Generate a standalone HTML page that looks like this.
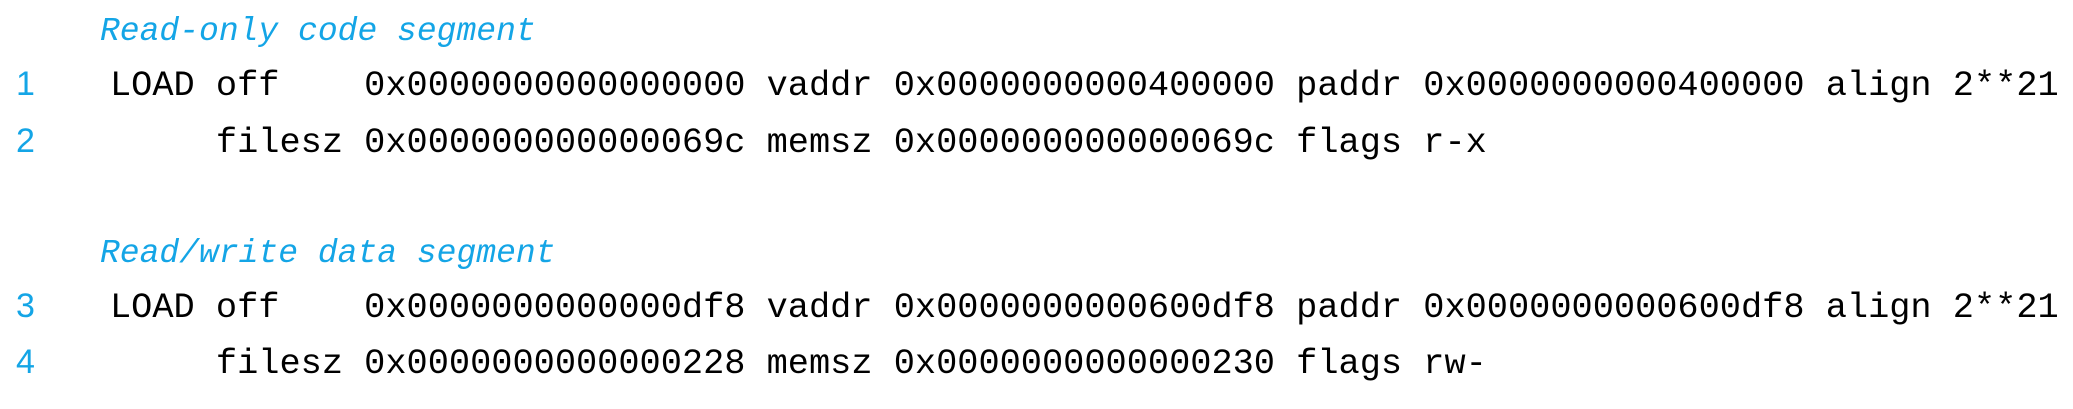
<!DOCTYPE html>
<html><head><meta charset="utf-8"><style>
html,body{margin:0;padding:0;background:#fff;width:2073px;height:409px;overflow:hidden;position:relative}
.c{position:absolute;white-space:pre;font-family:"Liberation Mono",monospace;font-size:35.3px;line-height:40px;color:#000}
.cm{position:absolute;white-space:pre;font-family:"Liberation Mono",monospace;font-style:italic;font-size:33px;line-height:40px;color:#14a5e6}
.n{position:absolute;font-family:"Liberation Sans",sans-serif;font-size:34px;line-height:40px;color:#14a5e6;left:16px}
</style></head><body>
<div class="cm" style="left:100px;top:12px">Read-only code segment</div>
<div class="n" style="top:64px">1</div>
<div class="c" style="left:110px;top:66px">LOAD off    0x0000000000000000 vaddr 0x0000000000400000 paddr 0x0000000000400000 align 2**21</div>
<div class="n" style="top:121px">2</div>
<div class="c" style="left:110px;top:123px">     filesz 0x000000000000069c memsz 0x000000000000069c flags r-x</div>
<div class="cm" style="left:100px;top:234px">Read/write data segment</div>
<div class="n" style="top:286px">3</div>
<div class="c" style="left:110px;top:288px">LOAD off    0x0000000000000df8 vaddr 0x0000000000600df8 paddr 0x0000000000600df8 align 2**21</div>
<div class="n" style="top:342px">4</div>
<div class="c" style="left:110px;top:344px">     filesz 0x0000000000000228 memsz 0x0000000000000230 flags rw-</div>
</body></html>
